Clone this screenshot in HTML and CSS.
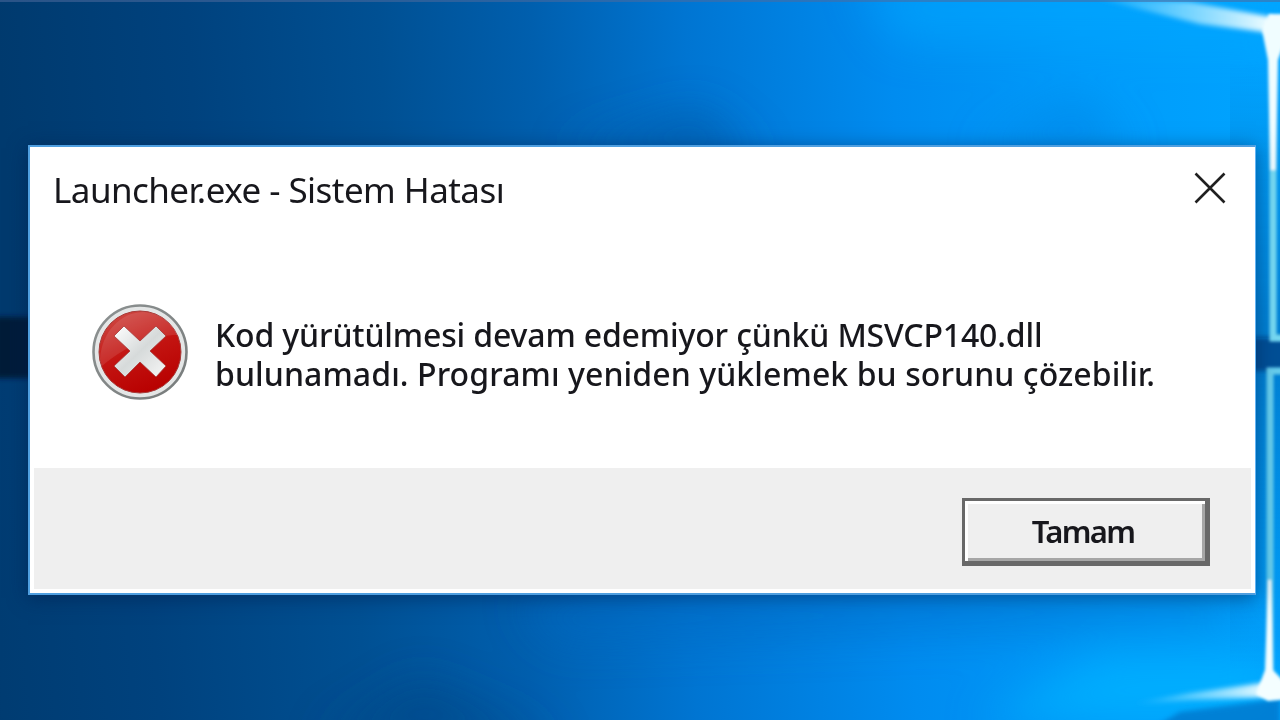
FILE: index.html
```
<!DOCTYPE html>
<html lang="tr">

<head>
    <meta charset="UTF-8">
    <meta name="viewport" content="width=device-width, initial-scale=1.0">
    <title>Launcher.exe - Sistem Hatası</title>
    <link rel="stylesheet" href="styles.css">
</head>

<body>
    <svg class="wallpaper" viewBox="0 0 1280 720" aria-hidden="true">
        <defs>
            <linearGradient id="sky" gradientUnits="userSpaceOnUse" x1="0" y1="80" x2="1270" y2="0">
                <stop offset="0" stop-color="#003a6e" />
                <stop offset=".15" stop-color="#00427e" />
                <stop offset=".3" stop-color="#005093" />
                <stop offset=".42" stop-color="#005fae" />
                <stop offset=".54" stop-color="#0075d2" />
                <stop offset=".7" stop-color="#008cf0" />
                <stop offset=".85" stop-color="#009bfa" />
                <stop offset="1" stop-color="#00a4ff" />
            </linearGradient>
            <linearGradient id="bar" x1="0" y1="0" x2="1" y2="0">
                <stop offset="0" stop-color="#001a38" />
                <stop offset="1" stop-color="#004f96" />
            </linearGradient>
            <linearGradient id="pane-top" x1="0" y1="0" x2="0" y2="1">
                <stop offset="0" stop-color="#0082d6" stop-opacity="0" />
                <stop offset="1" stop-color="#007fd2" />
            </linearGradient>
            <linearGradient id="pane-bottom" x1="0" y1="1" x2="0" y2="0">
                <stop offset="0" stop-color="#0082d6" stop-opacity="0" />
                <stop offset="1" stop-color="#007fd2" />
            </linearGradient>
            <linearGradient id="beam" x1="0" y1="0" x2="1" y2="0">
                <stop offset="0" stop-color="#7fdcff" stop-opacity="0" />
                <stop offset=".5" stop-color="#8edfff" stop-opacity=".75" />
                <stop offset="1" stop-color="#f4feff" />
            </linearGradient>
            <filter id="soft" x="-50%" y="-50%" width="200%" height="200%">
                <feGaussianBlur stdDeviation="22" />
            </filter>
            <filter id="edge" x="-5%" y="-50%" width="110%" height="200%">
                <feGaussianBlur stdDeviation="2.5" />
            </filter>
            <filter id="thin" filterUnits="userSpaceOnUse" x="1240" y="0" width="60" height="720">
                <feGaussianBlur stdDeviation="1.8" />
            </filter>
        </defs>
        <rect width="1280" height="720" fill="url(#sky)" />
        <rect y="350" width="1280" height="370" fill="url(#sky)" transform="translate(-90 0) scale(1.08 1)" />
        <g filter="url(#soft)">
            <path d="M560 150L700 110L760 160Z" fill="#00549c" opacity=".6" />
            <path d="M980 150L1080 100L1130 150Z" fill="#0082e2" opacity=".6" />
            <path d="M860 -20H1280V40H900Z" fill="#00a8ff" opacity=".6" />
            <path d="M320 740L420 680L560 740Z" fill="#003f80" opacity=".5" />
            <path d="M980 720L1100 660H1270V720Z" fill="#00b4ff" opacity=".8" />
            <path d="M520 600H1230V620L560 640Z" fill="#0068c0" opacity=".6" />
        </g>
        <path d="M1230 60H1280V338H1230Z" fill="url(#pane-top)" />
        <path d="M1230 350H1280V670H1230Z" fill="url(#pane-bottom)" />
        <path d="M-10 317H1240V378H-10Z" fill="url(#bar)" filter="url(#edge)" />
        <path d="M1200 337H1290V371H1200Z" fill="#004f96" filter="url(#edge)" />
        <path d="M1090 -3L1190 2L1272 17V33L1200 24Z" fill="url(#beam)" filter="url(#edge)" />
        <path d="M1130 704L1190 693L1270 682V697L1190 700Z" fill="url(#beam)" filter="url(#edge)" />
        <path d="M1180 712L1280 699V730H1150Z" fill="#0070c4" filter="url(#edge)" opacity=".7" />
        <g filter="url(#thin)">
            <path d="M1273 24V338H1290" fill="none" stroke="#76d9f2" stroke-width="7" />
            <path d="M1290 371H1270V690" fill="none" stroke="#66cdec" stroke-width="7" />
            <path d="M1269 14H1290V28L1278 60L1276 170H1270L1268 60L1262 30Z" fill="#f0fdff" />
            <path d="M1268 580H1271L1273 670L1290 688V699L1268 701L1256 694L1265 670Z" fill="#f4feff" />
        </g>
        <path d="M0 0H1280V2H0Z" fill="#4d6a9c" opacity=".55" />
    </svg>

    <main class="dialog">
        <header class="titlebar">
            <h1>Launcher.exe - Sistem Hatası</h1>
            <button class="close" aria-label="Kapat">
                <svg viewBox="0 0 32 32" width="32" height="32">
                    <path d="M1.5 1.5L30.5 30.5M30.5 1.5L1.5 30.5" />
                </svg>
            </button>
        </header>
        <section class="content">
            <svg class="error-icon" viewBox="0 0 96 96" width="96" height="96">
                <defs>
                    <linearGradient id="rim" x1="0" y1="0" x2="1" y2="1">
                        <stop offset="0" stop-color="#8d9292" />
                        <stop offset="1" stop-color="#777b7b" />
                    </linearGradient>
                    <linearGradient id="red" x1=".2" y1="0" x2=".6" y2="1">
                        <stop offset="0" stop-color="#cf4a45" />
                        <stop offset=".5" stop-color="#c31512" />
                        <stop offset="1" stop-color="#b80000" />
                    </linearGradient>
                    <linearGradient id="cross" x1="0" y1="0" x2="1" y2="1">
                        <stop offset="0" stop-color="#ffffff" />
                        <stop offset=".5" stop-color="#d6dada" />
                        <stop offset="1" stop-color="#f7f7f7" />
                    </linearGradient>
                </defs>
                <circle cx="48" cy="48" r="46.5" fill="#e4e6e6" stroke="url(#rim)" stroke-width="2.6" />
                <circle cx="48" cy="48" r="41" fill="url(#red)" stroke="#a63a38" stroke-width="1" />
                <path d="M8 55C10 27 29 9 50 8C67 8 80 17 86 31C61 31 38 39 10 62Z" fill="#fff" opacity=".1" />
                <path class="cross" d="M32 22L48 37L64 22L74 32L58 47L74 62L64 73L48 58L33 73L22 62L38 47L22 32Z" fill="url(#cross)" />
            </svg>
            <div class="message">
                <p class="line-first">Kod yürütülmesi devam edemiyor çünkü MSVCP140.dll</p>
                <p class="line-second">bulunamadı. Programı yeniden yüklemek bu sorunu çözebilir.</p>
            </div>
        </section>
        <footer class="actions">
            <button class="ok">Tamam</button>
        </footer>
    </main>
</body>

</html>
```
FILE: styles.css
```
* {
    padding: 0;
    margin: 0;
    box-sizing: border-box;
    font-family: "Noto Sans", "Open Sans", sans-serif;
}

body {
    width: 1280px;
    height: 720px;
    padding: 145px 24px 125px 28px;
    overflow: hidden;
    background-color: #0062b5;
}

.wallpaper {
    position: absolute;
    top: 0;
    left: 0;
    width: 1280px;
    height: 720px;
}

.dialog {
    position: relative;
    display: flex;
    flex-direction: column;
    width: 1228px;
    height: 450px;
    border: 2px solid #4f9fe0;
    border-right: 1px solid #62b4f5;
    background-color: #fff;
    color: #17171c;
    box-shadow: 0 3px 18px rgba(0, 25, 70, .5);
}

.titlebar {
    display: flex;
    justify-content: space-between;
    align-items: center;
    height: 86px;
    padding: 0 29px 0 23px;
}

h1 {
    font-size: 35px;
    line-height: 48px;
    font-weight: 400;
    letter-spacing: -.55px;
    white-space: nowrap;
}

.close {
    display: flex;
    margin-bottom: 4px;
    border: none;
    background: none;
}

.close path {
    fill: none;
    stroke: #202020;
    stroke-width: 2.6;
}

.content {
    display: flex;
    flex: 1;
    gap: 27px;
    padding: 71px 0 0 62px;
}

.error-icon {
    flex: none;
}

.cross {
    stroke: #a53a38;
    stroke-width: .8;
    stroke-linejoin: round;
}

.message {
    padding-top: 11px;
}

.message p {
    font-size: 32px;
    line-height: 39px;
    font-weight: 500;
    white-space: nowrap;
}

.line-first {
    letter-spacing: -.15px;
}

.line-second {
    letter-spacing: .08px;
}

.actions {
    display: flex;
    justify-content: flex-end;
    height: 121px;
    margin: 0 4px 4px;
    padding: 30px 41px 0 0;
    background-color: #efefef;
}

.ok {
    width: 248px;
    height: 68px;
    padding-right: 4px;
    border: 3px solid #686868;
    border-width: 3px 5px 5px 3px;
    background-color: #efefef;
    box-shadow: inset 3px 3px 0 #fff, inset -3px -3px 0 #a6a6a6;
    color: #17171c;
    font-size: 31px;
    font-weight: 600;
    letter-spacing: -1.7px;
}
```
